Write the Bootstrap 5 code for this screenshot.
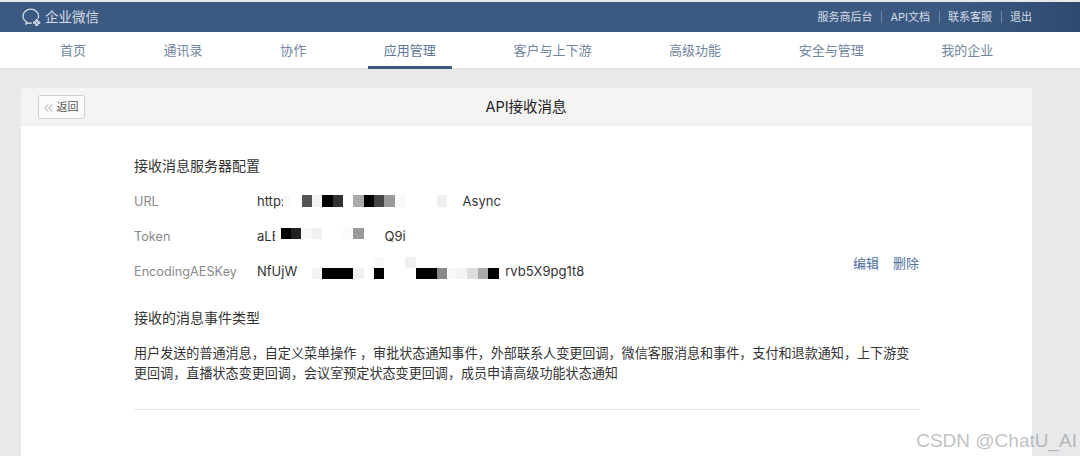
<!DOCTYPE html>
<html lang="zh-CN">
<head>
<meta charset="utf-8">
<title>API接收消息</title>
<link href="https://cdn.jsdelivr.net/npm/bootstrap@5.3.0/dist/css/bootstrap.min.css" rel="stylesheet">
<style>
html,body{height:456px;overflow:hidden}
body{background:#e8e9eb;font-family:"Inter","Noto Sans CJK SC",sans-serif;color:#333;padding-top:2px;position:relative}
.topstrip{height:30px;background:linear-gradient(90deg,#3c5a81 0,#3c5a81 88%,#2f4a6f 100%);padding:0 48px 0 22px;color:#d5dde8}
.brandtext{font-size:13.5px;color:#d5dde8;margin-left:4px}
.toplinks{font-size:11px;line-height:30px}
.toplinks a{color:#d5dde8;text-decoration:none}
.toplinks i{display:block;width:1px;height:12px;background:#71869f;margin:0 8.5px}
.mainnav{height:37px;background:#fff;border-bottom:1px solid #dfe1e4;padding-left:44px;gap:45.6px;flex-wrap:nowrap}
.mainnav .nav-link{padding:0 16px;height:37px;line-height:37px;font-size:13px;color:#7085a0}
.mainnav .nav-link.active{color:#5f7796;border-bottom:3px solid #3c5a81}
.panel{position:relative;margin:19px 0 0 21px;width:1011px;height:368px;border:0;border-radius:4px 4px 0 0;background:#fff}
.panelhead{height:38px;background:#f4f4f5;border-bottom:1px solid #ebebec;padding:0;position:relative;border-radius:4px 4px 0 0!important}
.backbtn{position:absolute;left:17px;top:7px;width:47px;height:24px;padding:0;border:1px solid #d0d2d4;border-radius:2px;background:#fbfbfb;font-size:11px;color:#555;line-height:21px}
.paneltitle{font-size:14.5px;line-height:38px;color:#222;text-align:center;margin-left:-1px}
.panelbody{padding:30px 112px 0 113px}
.secttitle{font-size:14px;line-height:20px;color:#333;margin:0;font-weight:400}
.cfgrow{position:relative;height:35px;line-height:35px}
.cfglabel{width:123px;color:#8a8a8a;font-size:12.7px}
.cfgval{color:#333;font-size:13px}
.tail-url{margin-left:178px}
.tail-token{margin-left:105px}
.tail-key{margin-left:208px}
.mosaic{position:absolute;left:0;top:0;pointer-events:none}
.cfgactions{position:absolute;right:1px;top:-8px;font-size:13px;line-height:35px;gap:14px}
.cfgactions a{color:#4c6f9c;text-decoration:none}
.secondtitle{margin-top:19px}
.eventtext{font-size:13.08px;line-height:20px;color:#333;margin:15px 0 0;max-width:780px}
.endrule{margin:26px 0 0;border:0;border-top:1px solid #e8e8e8;opacity:1}
.stamp{position:absolute;right:3px;bottom:4px;font-family:"Liberation Sans",sans-serif;font-size:19px;line-height:22px;color:rgba(130,130,130,.5)}
</style>
</head>
<body>
<div class="topstrip d-flex align-items-center justify-content-between">
  <div class="d-flex align-items-center">
    <svg width="19" height="18" viewBox="0 0 19 18" fill="none" stroke="#d5dde8" stroke-width="1.3"><path d="M15.800 10.800C16.300 9.900 16.600 9 16.600 8C16.600 4.300 13 1.200 8.800 1.200C4.600 1.200 1 4.300 1 8C1 10.400 2.300 12.500 4.400 13.800L3.900 15.800L6.300 14.800C7.300 15.100 8.400 15.200 10 15.100"/><circle cx="12.600" cy="14.600" r="1"/><circle cx="16.800" cy="14.600" r="1"/><circle cx="14.700" cy="12.600" r=".9"/><circle cx="14.700" cy="16.700" r=".9"/></svg>
    <span class="brandtext">企业微信</span>
  </div>
  <div class="toplinks d-flex align-items-center">
    <a href="#">服务商后台</a><i></i><a href="#">API文档</a><i></i><a href="#">联系客服</a><i></i><a href="#">退出</a>
  </div>
</div>
<ul class="nav mainnav">
  <li class="nav-item"><a class="nav-link" href="#">首页</a></li>
  <li class="nav-item"><a class="nav-link" href="#">通讯录</a></li>
  <li class="nav-item"><a class="nav-link" href="#">协作</a></li>
  <li class="nav-item"><a class="nav-link active" href="#">应用管理</a></li>
  <li class="nav-item"><a class="nav-link" href="#">客户与上下游</a></li>
  <li class="nav-item"><a class="nav-link" href="#">高级功能</a></li>
  <li class="nav-item"><a class="nav-link" href="#">安全与管理</a></li>
  <li class="nav-item"><a class="nav-link" href="#">我的企业</a></li>
</ul>
<div class="card panel">
  <div class="card-header panelhead">
    <button type="button" class="btn backbtn"><svg width="9" height="8" viewBox="0 0 9 8" fill="none" stroke="#999" stroke-width=".9"><path d="M4 .5L.8 4L4 7.500M8 .5L4.800 4L8 7.500"/></svg> 返回</button>
    <div class="paneltitle">API接收消息</div>
  </div>
  <div class="card-body panelbody">
    <h2 class="secttitle mb-2">接收消息服务器配置</h2>
    <div class="cfgrow d-flex">
      <div class="cfglabel">URL</div>
      <div class="cfgval position-relative">http:<span class="tail-url">Async</span>
        <svg class="mosaic" width="210" height="35"><rect x="26" y="11" width="8" height="12" fill="#fafafa"/><rect x="45" y="11" width="10" height="12" fill="#555"/><rect x="55" y="11" width="10" height="12" fill="#f4f4f4"/><rect x="65" y="11" width="11" height="12" fill="#000"/><rect x="76" y="11" width="10" height="12" fill="#333"/><rect x="96" y="11" width="11" height="12" fill="#aaa"/><rect x="107" y="11" width="10" height="12" fill="#000"/><rect x="117" y="11" width="10" height="12" fill="#444"/><rect x="127" y="11" width="11" height="12" fill="#999"/><rect x="138" y="11" width="10" height="12" fill="#f8f8f8"/><rect x="180" y="11" width="10" height="12" fill="#f0f0f0"/></svg>
      </div>
    </div>
    <div class="cfgrow d-flex">
      <div class="cfglabel">Token</div>
      <div class="cfgval position-relative">aLE<span class="tail-token">Q9i</span>
        <svg class="mosaic" width="210" height="35"><rect x="18" y="4" width="6" height="26" fill="#fff"/><rect x="24" y="9" width="10" height="11" fill="#000"/><rect x="34" y="9" width="10" height="11" fill="#222"/><rect x="44" y="9" width="11" height="11" fill="#f8f8f8"/><rect x="55" y="9" width="10" height="11" fill="#f0f0f0"/><rect x="86" y="9" width="10" height="11" fill="#fafafa"/><rect x="96" y="9" width="11" height="11" fill="#999"/></svg>
      </div>
    </div>
    <div class="cfgrow d-flex">
      <div class="cfglabel">EncodingAESKey</div>
      <div class="cfgval position-relative">NfUjW<span class="tail-key">rvb5X9pg1t8</span>
        <svg class="mosaic" width="250" height="35"><rect x="55" y="14" width="10" height="11" fill="#f4f4f4"/><rect x="65" y="14" width="31" height="11" fill="#000"/><rect x="96" y="14" width="11" height="11" fill="#f0f0f0"/><rect x="117" y="3" width="10" height="11" fill="#f8f8f8"/><rect x="117" y="14" width="10" height="11" fill="#000"/><rect x="148" y="3" width="11" height="11" fill="#f0f0f0"/><rect x="159" y="14" width="21" height="11" fill="#000"/><rect x="180" y="14" width="10" height="11" fill="#888"/><rect x="190" y="14" width="10" height="11" fill="#f8f8f8"/><rect x="200" y="14" width="10" height="11" fill="#f4f4f4"/><rect x="210" y="14" width="11" height="11" fill="#ddd"/><rect x="221" y="14" width="10" height="11" fill="#aaa"/><rect x="231" y="14" width="11" height="11" fill="#000"/></svg>
      </div>
      <div class="cfgactions d-flex"><a href="#">编辑</a><a href="#">删除</a></div>
    </div>
    <h2 class="secttitle secondtitle">接收的消息事件类型</h2>
    <p class="eventtext">用户发送的普通消息，自定义菜单操作 ，审批状态通知事件，外部联系人变更回调，微信客服消息和事件，支付和退款通知，上下游变更回调，直播状态变更回调，会议室预定状态变更回调，成员申请高级功能状态通知</p>
    <hr class="endrule">
  </div>
</div>
<div class="stamp">CSDN @ChatU_AI</div>
<script src="https://cdn.jsdelivr.net/npm/bootstrap@5.3.0/dist/js/bootstrap.bundle.min.js"></script>
</body>
</html>
